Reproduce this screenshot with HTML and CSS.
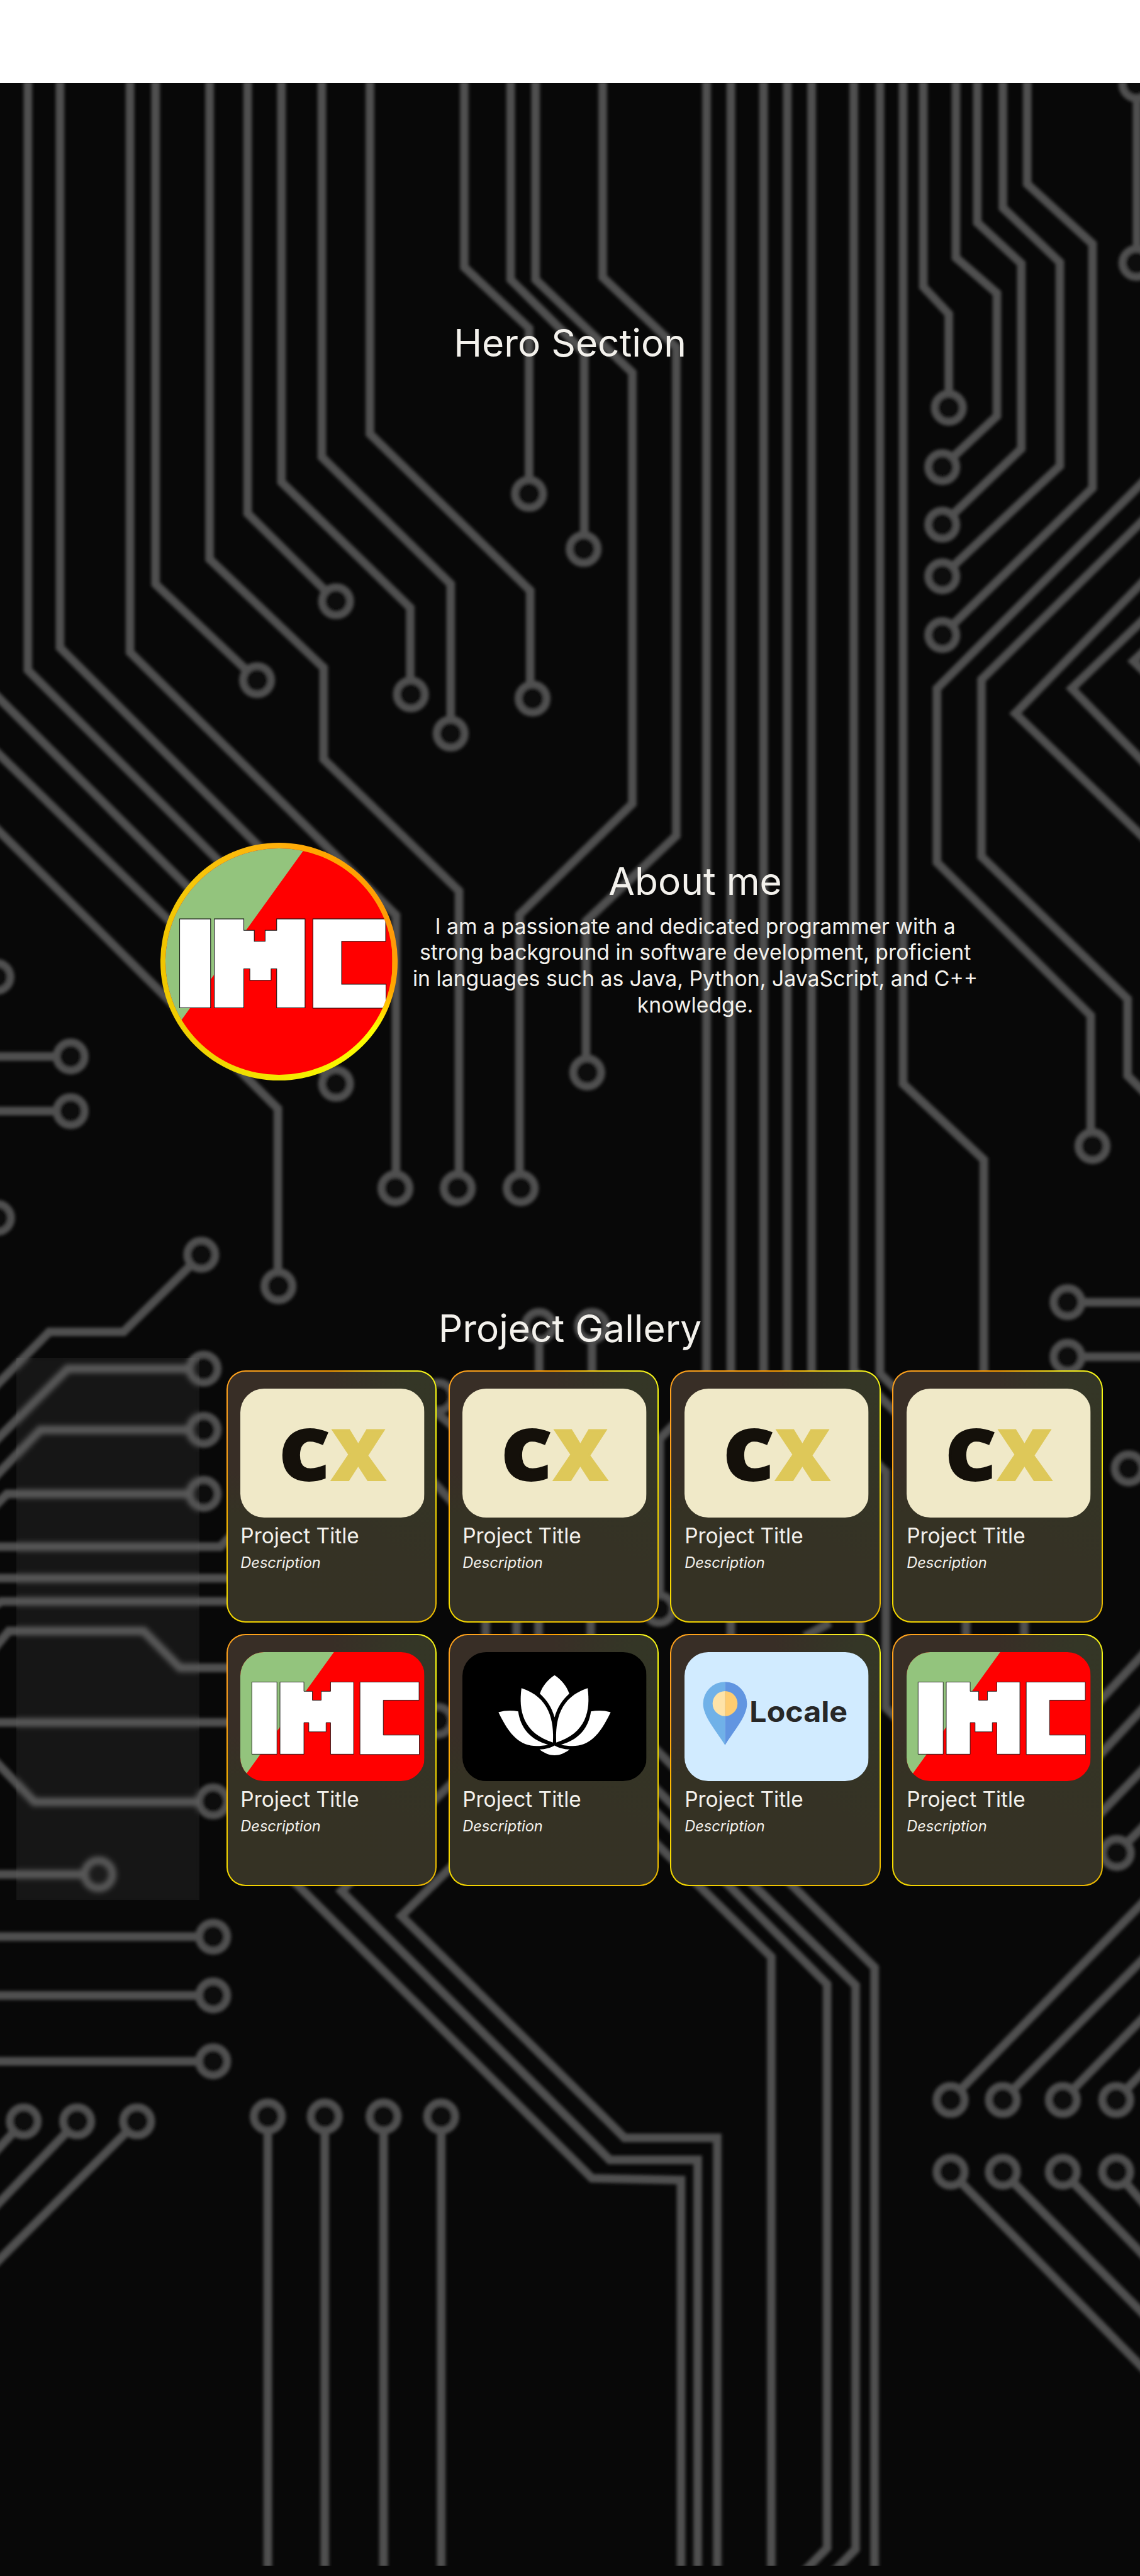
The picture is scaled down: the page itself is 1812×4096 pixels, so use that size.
FILE: index.html
```html
<!DOCTYPE html>
<html lang="en">
<head>
<meta charset="utf-8">
<title>Portfolio</title>
<link rel="stylesheet" href="styles.css">
</head>
<body>
<svg class="defs" width="0" height="0" aria-hidden="true">
  <symbol id="imc" viewBox="0 -46 310 310" preserveAspectRatio="xMidYMid slice">
    <rect x="0" y="-46" width="310" height="310" fill="#f00"/>
    <path d="M0-46H190.7L0 219Z" fill="#93c47d"/>
    <g fill="#fff" stroke="#111" stroke-width=".9">
      <path d="M19.4 50.4H61.7V172H19.4Z"/>
      <path d="M66.8 50.4H107.1V66H121.4V81H136.2V66H152V50.4H190.8V172H152V118.7H144.4V134.3H115.3V118.7H107.1V172H66.8Z"/>
      <path d="M201.5 50.4H301V81H240.8V139.7H301.5V172.5H201.5Z"/>
    </g>
  </symbol>
  <symbol id="cx" viewBox="0 0 310 218">
    <rect width="310" height="218" fill="#f0e9c8"/>
    <text class="cx-letter" x="66.500" y="153.500" textLength="83" lengthAdjust="spacingAndGlyphs" fill="#14100a" stroke="#14100a">C</text>
    <text class="cx-letter" x="155" y="153.500" textLength="88" lengthAdjust="spacingAndGlyphs" fill="#dec859" stroke="#dec859">X</text>
  </symbol>
  <symbol id="lotus" viewBox="0 0 310 218">
    <rect width="310" height="218" fill="#000"/>
    <g fill="#fff">
      <path d="M155.2 39C166 46 175 56 180 70C168 81 160 93 155.2 110C150.4 93 142.4 81 130.4 70C135.4 56 144.4 46 155.2 39Z"/>
      <path id="petal-in" d="M210.9 60.7C216 98 209 136 158 152.3C156 115 164 76 210.9 60.7Z"/>
      <path id="petal-out" d="M249.7 101.3C238 98 227 98 216.4 100C213 127 196 148 166 156C205 164 226 151 249.7 101.3Z"/>
      <use href="#petal-in" transform="matrix(-1 0 0 1 310.4 0)"/>
      <use href="#petal-out" transform="matrix(-1 0 0 1 310.4 0)"/>
      <path d="M155.2 157.3C162 161 170 163.500 180.5 164C164 177 146.400 177 129.900 164C140.400 163.500 148.400 161 155.200 157.300Z"/>
    </g>
  </symbol>
  <symbol id="locale" viewBox="0 0 310 218">
    <rect width="310" height="218" fill="#d1ebff"/>
    <path d="M68.300 50A37 37 0 0 0 31.300 87C31.300 108 52 131 68.300 156.700Z" fill="#70b1e8"/>
    <path d="M68.300 50A37 37 0 0 1 105.300 87C105.300 108 84.600 131 68.300 156.700Z" fill="#6195e1"/>
    <path d="M68.300 65.700A21 21 0 0 0 68.300 107.700Z" fill="#fee3a8"/>
    <path d="M68.300 65.700A21 21 0 0 1 68.300 107.700Z" fill="#ffcd71"/>
    <text class="locale-word" x="109.500" y="118" textLength="165" lengthAdjust="spacingAndGlyphs">Locale</text>
  </symbol>
</svg>

<div class="page">
  <svg class="circuit" viewBox="0 0 1920 4340" aria-hidden="true">
    <defs>
      <filter id="soft" filterUnits="userSpaceOnUse" x="-60" y="80" width="2040" height="4260"><feGaussianBlur stdDeviation="3"/></filter>
      <clipPath id="board"><rect x="0" y="0" width="1920" height="4183"/></clipPath>
    </defs>
    <g transform="translate(0 140)" clip-path="url(#board)"><g transform="translate(0 -140)">
    <g class="traces" filter="url(#soft)">
      <path d="M47 90V1129L450 1532M101 90V1091L500 1490M-20 1158L400 1578M-20 1253L566 1826M-20 1382L468 1868V2167"/>
      <path d="M219 90V1099L667 1542V2002M262 90V984L433 1146M353 90V942L545 1125V1279L773 1501V2002"/>
      <path d="M417 90V865L566 1013M474 90V812L691 1024V1170M542 90V770L759 984V1236M623 90V731L893 995V1177"/>
      <path d="M782 90V450L891 553V832M860 90V471L984 594V925M902 90V471L1065 628V1354L875 1541V2002M1015 90V467L1139 585V1408L987 1552V1807"/>
      <path d="M1190 90V2330M1231 90V2790M1286 90V2330M1326 90V2330M1367 90V2360L1492 2480V2877L1520 2905M1438 90V2309L1520 2391M1482 90V2314L1520 2352M1521 90V1826L1657 1954V2330"/>
      <path d="M1555 90V483L1598 529V687M1610 90V434L1679 494V701L1587 787M1646 90V375L1720 444V756L1587 884M1689 90V350L1785 442V785L1587 971M1730 90V310L1840 411V822L1587 1070"/>
      <path d="M1930 807L1578 1160V1453L1837 1711V1931M1930 872L1653 1145V1443L1899 1683V1812L1930 1843M1930 975L1710 1202L1930 1415M1930 1040L1805 1160L1930 1288M1930 1094L1909 1114L1930 1134M1915 140V443"/>
      <path d="M-10 1780H119M-10 1872H119M339 2114L208 2244H83L-10 2338M343 2306H114L-10 2430M343 2409H68L-10 2490M343 2517H12L-10 2539"/>
      <path d="M-10 2606H371L400 2577M-10 2659H400M-10 2706L2 2698H400M-10 2778L15 2748H242L303 2810H400M-10 2902H400M-10 2965L58 3036H359M-10 3158H166"/>
      <path d="M-10 3263H359M-10 3362H359M-10 3473H359M40 3574L-10 3628M130 3574L-10 3720M231 3574L-10 3816M451 3567V4400M547 3567V4400M646 3567V4400M743 3567V4400"/>
      <path d="M908 2234V2330M997 2234V2330M735 2380L765 2405M710 2475L770 2540M1140 2395L1111 2424V2712M1448 2715V2780M1398 2734L1355 2757M1627 2715V2780M1725 2715V2780"/>
      <path d="M818 2715V2823L1299 3297V4400M870 2715V2817L1393 3343V4293L1340 4347M907 2715V2819L1441 3345V4295L1390 4347M995 2715V2838L1473 3315V4400"/>
      <path d="M490 3165L997 3670L1147 3673V4400M800 2966L575 3186L1027 3639H1175V4400M800 3106L676 3228L1052 3602H1208V4400"/>
      <path d="M1798 2194H1930M1798 2286H1930M1930 2782L1840 2879M1930 2873L1840 2970M1930 2976L1840 3069M1930 3073L1881 3122"/>
      <path d="M1601 3538L1930 3200M1689 3538L1930 3296M1790 3538L1930 3395M1880 3538L1930 3486M1601 3659L1930 3995M1689 3659L1930 3903M1790 3659L1930 3804M1880 3659L1930 3717"/>
      <g class="pads">
        <circle cx="566" cy="1826" r="24"/><circle cx="469" cy="2167" r="24"/><circle cx="666" cy="2002" r="24"/><circle cx="771" cy="2002" r="24"/><circle cx="877" cy="2002" r="24"/>
        <circle cx="433" cy="1146" r="24"/><circle cx="566" cy="1013" r="24"/><circle cx="692" cy="1170" r="24"/><circle cx="759" cy="1236" r="24"/><circle cx="897" cy="1177" r="24"/>
        <circle cx="891" cy="832" r="24"/><circle cx="983" cy="925" r="24"/><circle cx="989" cy="1807" r="24"/><circle cx="1598" cy="687" r="24"/><circle cx="1587" cy="787" r="24"/>
        <circle cx="1587" cy="884" r="24"/><circle cx="1587" cy="971" r="24"/><circle cx="1587" cy="1070" r="24"/><circle cx="1914" cy="142" r="24"/><circle cx="1914" cy="443" r="24"/>
        <circle cx="1840" cy="1931" r="24"/><circle cx="-6" cy="1646" r="24"/><circle cx="-5" cy="2052" r="24"/><circle cx="119" cy="1780" r="24"/><circle cx="119" cy="1872" r="24"/>
        <circle cx="339" cy="2114" r="24"/><circle cx="343" cy="2306" r="24"/><circle cx="343" cy="2409" r="24"/><circle cx="343" cy="2517" r="24"/><circle cx="359" cy="3035" r="24"/>
        <circle cx="166" cy="3158" r="24"/><circle cx="359" cy="3263" r="24"/><circle cx="359" cy="3362" r="24"/><circle cx="359" cy="3473" r="24"/>
        <circle cx="40" cy="3574" r="24"/><circle cx="130" cy="3574" r="24"/><circle cx="231" cy="3574" r="24"/>
        <circle cx="451" cy="3566" r="24"/><circle cx="547" cy="3566" r="24"/><circle cx="646" cy="3566" r="24"/><circle cx="743" cy="3566" r="24"/>
        <circle cx="908" cy="2234" r="24"/><circle cx="997" cy="2234" r="24"/><circle cx="738" cy="2353" r="24"/><circle cx="737" cy="2899" r="24"/><circle cx="1110" cy="2711" r="24"/>
        <circle cx="1798" cy="2194" r="24"/><circle cx="1798" cy="2286" r="24"/><circle cx="1901" cy="2474" r="24"/><circle cx="1881" cy="3122" r="24"/>
        <circle cx="1601" cy="3538" r="24"/><circle cx="1689" cy="3538" r="24"/><circle cx="1790" cy="3538" r="24"/><circle cx="1880" cy="3538" r="24"/>
        <circle cx="1601" cy="3659" r="24"/><circle cx="1689" cy="3659" r="24"/><circle cx="1790" cy="3659" r="24"/><circle cx="1880" cy="3659" r="24"/>
      </g>
    </g>
    </g></g>
  </svg>

  <main class="content">
    <header class="topbar"></header>
    <section class="hero"><h1 class="heading">Hero Section</h1></section>

    <section class="about">
      <div class="avatar"><svg class="avatar-img"><use href="#imc"/></svg></div>
      <div class="about-text">
        <h2 class="heading">About me</h2>
        <p class="bio">I am a passionate and dedicated programmer with a<br>strong background in software development, proficient<br>in languages such as Java, Python, JavaScript, and C++<br>knowledge.</p>
      </div>
    </section>

    <section class="gallery">
      <h2 class="heading">Project Gallery</h2>
      <div class="gallery-body">
        <aside class="filters"></aside>
        <div class="cards">
          <article class="card"><svg class="thumb"><use href="#cx"/></svg><h3 class="card-title">Project Title</h3><p class="card-desc">Description</p></article>
          <article class="card"><svg class="thumb"><use href="#cx"/></svg><h3 class="card-title">Project Title</h3><p class="card-desc">Description</p></article>
          <article class="card"><svg class="thumb"><use href="#cx"/></svg><h3 class="card-title">Project Title</h3><p class="card-desc">Description</p></article>
          <article class="card"><svg class="thumb"><use href="#cx"/></svg><h3 class="card-title">Project Title</h3><p class="card-desc">Description</p></article>
          <article class="card"><svg class="thumb"><use href="#imc"/></svg><h3 class="card-title">Project Title</h3><p class="card-desc">Description</p></article>
          <article class="card"><svg class="thumb"><use href="#lotus"/></svg><h3 class="card-title">Project Title</h3><p class="card-desc">Description</p></article>
          <article class="card"><svg class="thumb"><use href="#locale"/></svg><h3 class="card-title">Project Title</h3><p class="card-desc">Description</p></article>
          <article class="card"><svg class="thumb"><use href="#imc"/></svg><h3 class="card-title">Project Title</h3><p class="card-desc">Description</p></article>
        </div>
      </div>
    </section>
  </main>
</div>
</body>
</html>
```
FILE: styles.css
```css
html {
  font-size: 9.4375px;
  background: #080808;
}

body {
  margin: 0;
  font-family: Inter, "Liberation Sans", sans-serif;
  color: #f3f1ec;
}

h1, h2, h3, p {
  margin: 0;
  font-weight: 400;
}

.defs {
  display: none;
}

/* The circuit board and the content share one grid cell. */
.page {
  display: grid;
  width: 192rem;
  height: 434rem;
  overflow: hidden;
}

.circuit,
.content {
  grid-area: 1 / 1;
}

.circuit {
  width: 192rem;
  height: 434rem;
}

.traces {
  fill: none;
  stroke: #4f4f4f;
  stroke-width: 14.5;
  stroke-linejoin: miter;
}

.pads {
  fill: #080808;
  stroke-width: 12.5;
}

.content {
  display: flex;
  flex-direction: column;
}

.topbar {
  height: 14rem;
  background: #fff;
}

.heading {
  font-size: 6.4rem;
  line-height: 7.75rem;
  text-align: center;
}

.hero {
  height: 88.1rem;
  padding-top: 39.9rem;
}

.about {
  display: flex;
  gap: 2.5rem;
  height: 40rem;
  padding-left: 27rem;
}

.avatar {
  width: 38.2rem;
  height: 38.2rem;
  padding: .9rem;
  border-radius: 50%;
  background: conic-gradient(#ffb00c 0deg, #ffa500 20deg, #ff9a08 80deg, #ffa800 105deg, #ffff00 125deg, #f5f000 165deg, #f0d400 215deg, #f0c400 275deg, #f5c808 310deg, #ffb00c 360deg);
}

.avatar-img {
  display: block;
  width: 100%;
  height: 100%;
  border-radius: 50%;
}

.about-text {
  padding-top: 2.6rem;
}

.bio {
  margin-top: 1.5rem;
  font-size: 3.58rem;
  line-height: 4.4rem;
  text-align: center;
}

.gallery {
  padding-top: 38rem;
}

.gallery-body {
  display: flex;
  align-items: flex-start;
  gap: 4.5rem;
  padding-left: 2.8rem;
  margin-top: 1rem;
}

.filters {
  width: 30.8rem;
  height: 91.4rem;
  background: rgba(255, 255, 255, .06);
  backdrop-filter: blur(3px);
}

.cards {
  display: grid;
  grid-template-columns: repeat(4, 35.4rem);
  grid-auto-rows: 42.5rem;
  gap: 1.9rem 2rem;
  padding-top: 2.15rem;
}

.card {
  box-sizing: border-box;
  padding: 2.8rem 2.2rem;
  border: 2px solid transparent;
  border-radius: 3.2rem;
  background:
    conic-gradient(#382e26 0deg, #343626 35deg, #343525 70deg, #353225 130deg, #353224 210deg, #353224 260deg, #382e26 285deg, #382e26 360deg) padding-box,
    conic-gradient(#ff9f00 0deg, #f5ee20 28deg, #f8fa10 50deg, #f0d800 90deg, #edb800 145deg, #f2cc00 200deg, #f5dc00 225deg, #ffb000 265deg, #ff9f1c 300deg, #ffa31c 325deg, #ff9f00 360deg) border-box;
}

.thumb {
  display: block;
  width: 31rem;
  height: 21.8rem;
  border-radius: 4rem;
}

.card-title {
  margin-top: .9rem;
  font-size: 3.54rem;
  line-height: 4.4rem;
}

.card-desc {
  margin-top: .8rem;
  font-size: 2.5rem;
  line-height: 3rem;
  font-style: italic;
}

.cx-letter {
  font: 800 117px "Open Sans", sans-serif;
  stroke-width: 4;
}

.locale-word {
  font: 700 48px Inter, sans-serif;
  fill: #272727;
}
```
